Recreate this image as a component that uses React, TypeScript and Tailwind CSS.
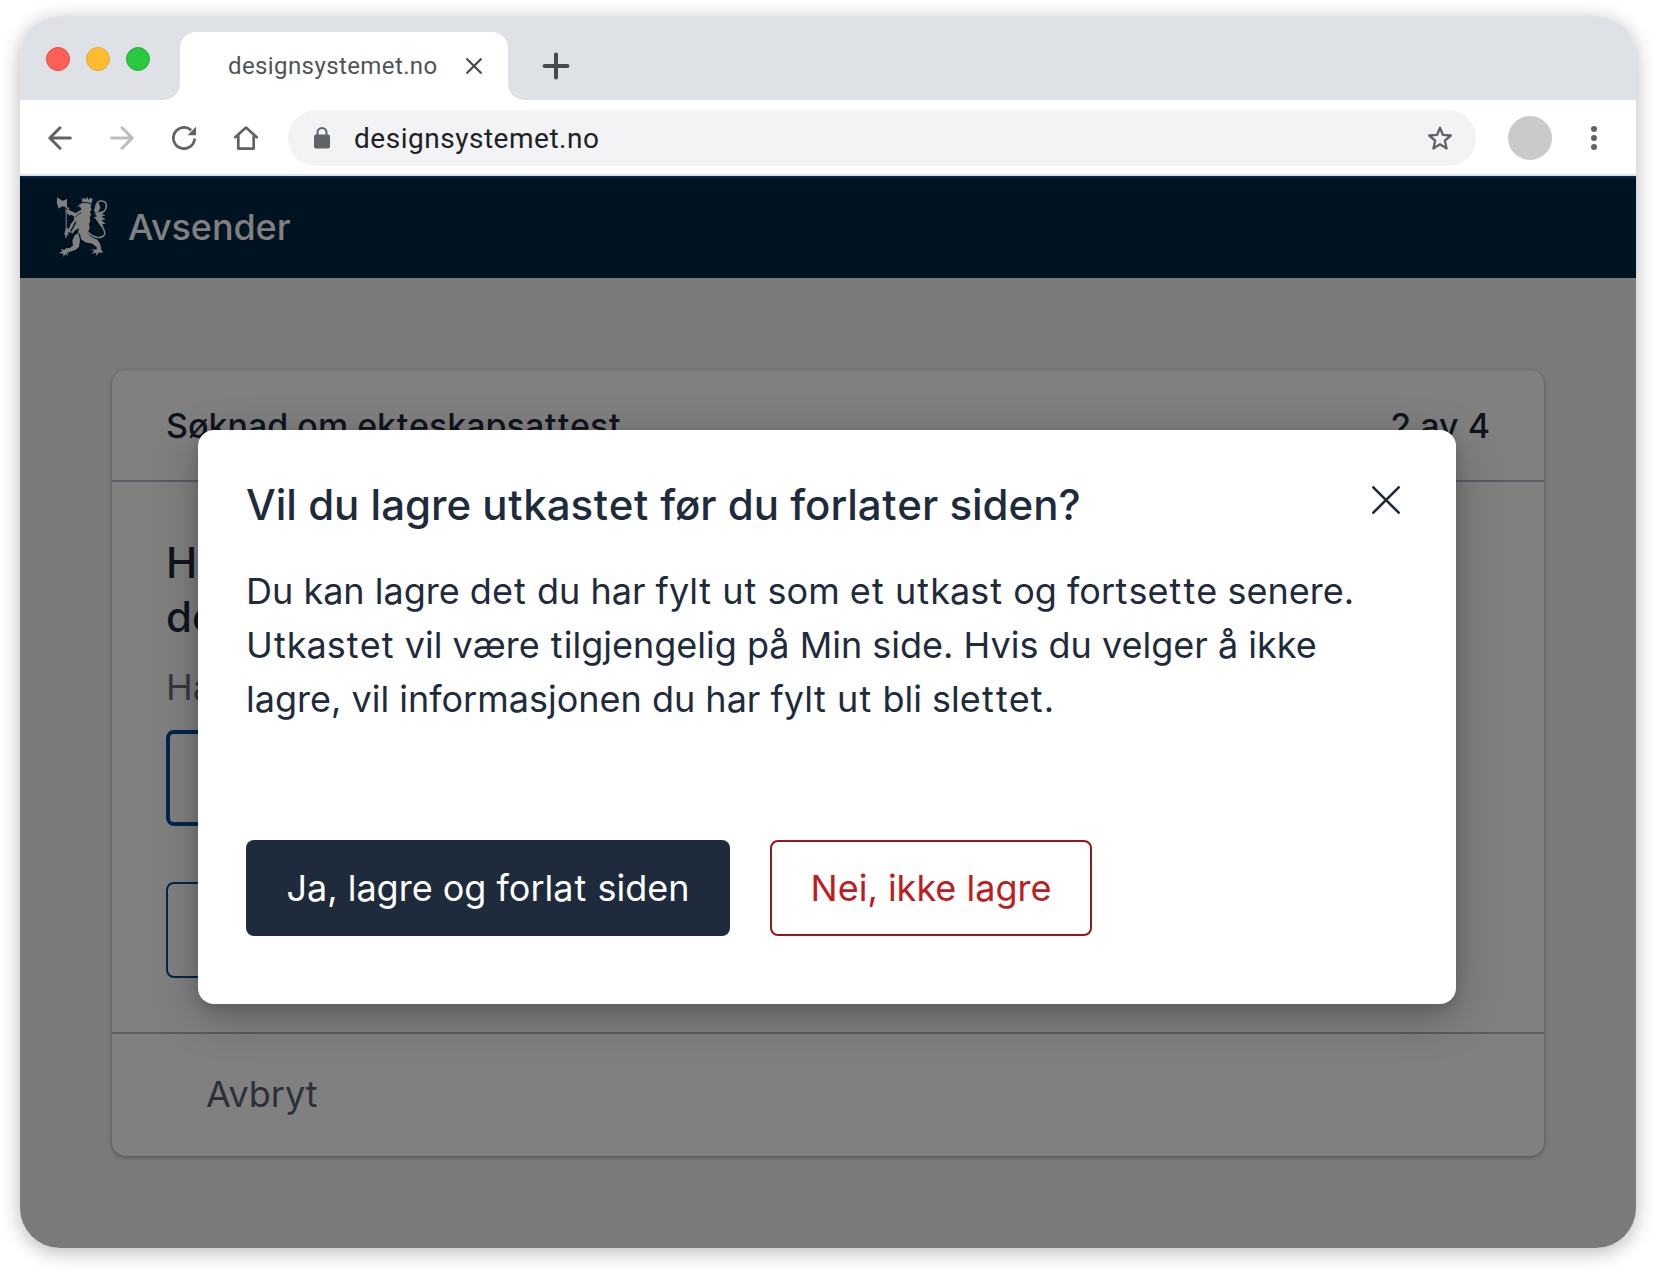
import React from "react";

function Lion({ className }: { className: string }) {
  return (
    <svg viewBox="0 0 240 240" className={className} fill="#808080" stroke="#808080" strokeLinejoin="round" strokeLinecap="round">
      {/* axe */}
      <path stroke="none" d="M51 37 L58 41 L67 47 L75 45 L81 42 L81 69 L74 65 L68 64 L61 67 L56 71 Q48 54 51 37Z" />
      <path fill="none" strokeWidth="3" d="M78.500 44 V158" />
      {/* crown */}
      <path stroke="none" d="M124 37 L129 44 L132 37 L137 44 L141 35 L146 44 L151 38 L158 42 L155 54 L127 50Z" />
      {/* head, mane and torso */}
      <path stroke="none" d="M108 55 L114 59 L122 58 L126 53 L154 56 L152 68 L155 72 L150 81 L153 89 L149 97 L151 107 L147 116 L149 128 L146 137 L142 146 L120 148 L114 142 L117 129 L104 137 L98 146 L93 141 L100 130 L109 112 L101 106 L103 93 L110 82 L124 74 L122 67 L110 64 L120 62Z" />
      <path fill="none" stroke="#001321" strokeWidth="2" d="M106 97 Q112 86 124 83" />
      {/* fore legs */}
      <path stroke="none" d="M81 65 L88 70 L87 75 L99 80 L111 87 L106 96 L93 89 L85 94 L88 87 L77 87 L83 83 L74 77 L83 76Z" />
      <path stroke="none" d="M106 108 L97 127 L91 136 L94 144 L84 141 L86 152 L79 147 L78 159 L73 146 L76 134 L81 127 L86 133 L92 118 L101 106Z" />
      {/* hind legs */}
      <path stroke="none" d="M115 143 L120 164 L117 186 L106 195 L88 201 L81 204 L84 213 L76 207 L71 216 L69 206 L57 203 L67 199 L62 191 L73 195 L78 190 L89 189 L99 182 L97 168 L103 152Z" />
      <path stroke="none" d="M120 145 L143 144 L153 155 L172 164 L181 178 L184 196 L190 202 L181 204 L178 202 L169 213 L169 203 L154 206 L163 199 L153 193 L170 194 L170 186 L157 176 L136 172 L123 162Z" />
      {/* tail */}
      <path fill="none" strokeWidth="4.500" d="M146 143 C158 157 183 163 193 150 C199 138 187 127 179 115 C171 101 176 92 187 83 C203 71 203 51 187 48 C174 46 167 54 168 70" />
      <path stroke="none" d="M166 62 L176 53 L181 68 L176 79 L168 87 L162 76Z" />
      <path stroke="none" d="M175 82 L192 77 L184 87 L197 91 L184 95 L197 103 L184 106 L197 116 L186 117 L192 125 L178 118 L169 104 L162 97 L172 94 L164 88Z" />
    </svg>
  );
}

/* Regular-weight copy whose "t" is set with a little extra room on each side. */
function Copy({ children }: { children: string }) {
  return (
    <>
      {children.split(/(t)/).map((part, i) =>
        part === "t" ? <span key={i} className="mx-[1.1px]">t</span> : part
      )}
    </>
  );
}

/* Same as Copy, for medium-weight headings. */
function Heading({ children }: { children: string }) {
  return (
    <>
      {children.split(/(t)/).map((part, i) =>
        part === "t" ? <span key={i} className="mx-[0.65px]">t</span> : part
      )}
    </>
  );
}

export default function App() {
  return (
    <div className="h-[1272px] w-[1656px] overflow-hidden bg-white px-5 pt-4 font-['Inter',sans-serif]">
      <div className="flex h-[1232px] w-[1616px] flex-col overflow-hidden rounded-[40px] bg-white shadow-[0_4px_20px_rgba(0,0,0,0.28)]">
        {/* tab strip */}
        <div className="flex h-[84px] shrink-0 bg-[#dee1e6] pl-[26px]">
          <div className="flex gap-4 pt-[31px]">
            <span className="h-6 w-6 rounded-full border border-[#e24b41] bg-[#ff5f57]" />
            <span className="h-6 w-6 rounded-full border border-[#e1a73e] bg-[#febc2e]" />
            <span className="h-6 w-6 rounded-full border border-[#2dac2f] bg-[#28c840]" />
          </div>
          <svg className="ml-[14px] mt-[68px] h-4 w-4 text-white" viewBox="0 0 16 16" fill="currentColor"><path d="M16 0v16H0C10 15 16 8 16 0Z" /></svg>
          <div className="mt-4 flex h-[68px] w-[328px] items-center rounded-t-2xl bg-white pl-12 pr-[26px]">
            <span className="flex-1 whitespace-nowrap font-['Roboto',sans-serif] text-[24px] tracking-[0.4px] text-[#505358]">designsystemet.no</span>
            <svg className="h-4 w-4" viewBox="0 0 16 16" stroke="#45484c" strokeWidth="2.2" strokeLinecap="round"><path d="M1.2 1.2l13.6 13.6M14.8 1.2L1.2 14.8" /></svg>
          </div>
          <svg className="mt-[68px] h-4 w-4 text-white" viewBox="0 0 16 16" fill="currentColor"><path d="M0 0v16h16C6 15 0 8 0 0Z" /></svg>
          <svg className="ml-[18px] mt-9 h-7 w-7" viewBox="0 0 28 28" stroke="#45484c" strokeWidth="4" strokeLinecap="round"><path d="M14 2.6v22.8M2.6 14h22.8" /></svg>
        </div>

        {/* toolbar */}
        <div className="flex h-[76px] shrink-0 items-center border-b-2 border-[#dee1e6] pl-7 pr-[37px] pt-0.5">
          <svg className="h-6 w-6" viewBox="0 0 24 24" fill="none" stroke="#5f6368" strokeWidth="3" strokeLinecap="round" strokeLinejoin="round"><path d="M22.3 12H2M12 1.8L1.8 12 12 22.2" /></svg>
          <svg className="ml-[38px] h-6 w-6" viewBox="0 0 24 24" fill="none" stroke="#babcbe" strokeWidth="3" strokeLinecap="round" strokeLinejoin="round"><path d="M1.7 12H22M12 1.8L22.2 12 12 22.2" /></svg>
          <svg className="ml-[38px] h-6 w-6" viewBox="0 0 24 24" fill="none"><path d="M22.6 12.5A10.6 10.6 0 1 1 19.2 4.2" stroke="#5f6368" strokeWidth="2.8" /><path d="M24 .8V9.300H15.500Z" fill="#5f6368" /></svg>
          <svg className="ml-[38px] h-6 w-6" viewBox="0 0 24 24" fill="none" stroke="#5f6368" strokeWidth="2.7" strokeLinejoin="round"><path d="M1.200 11.200L12 1.600 22.800 11.200M4.300 9v13.600h15.400V9" strokeLinecap="round" /></svg>
          <div className="ml-[30px] flex h-14 w-[1188px] items-center rounded-full bg-[#f1f3f4] pl-[26px] pr-6">
            <svg className="h-[22px] w-4" viewBox="0 0 16 22"><path d="M3.500 9V5.500a4.500 4.500 0 0 1 9 0V9" fill="none" stroke="#5f6368" strokeWidth="2" /><rect y="7.500" width="16" height="14" rx="2" fill="#5f6368" /></svg>
            <span className="ml-6 flex-1 pt-0.5 font-['Roboto',sans-serif] text-[28px] tracking-[0.52px] text-[#202124]">designsystemet.no</span>
            <svg className="h-6 w-6" viewBox="0 0 24 24" fill="none" stroke="#5f6368" strokeWidth="2.300" strokeLinejoin="round"><path d="M12 1.800l2.900 7 7.900.700-6 5.100 1.800 7.800-6.600-4.100-6.600 4.100 1.800-7.800-6-5.100L9.100 8.800Z" /></svg>
          </div>
          <span className="ml-8 h-11 w-11 rounded-full bg-[#cacaca]" />
          <span className="ml-auto flex w-[11px] flex-col items-center gap-[3px]">
            <i className="h-1.5 w-1.5 rounded-full bg-[#5f6368]" />
            <i className="h-1.5 w-1.5 rounded-full bg-[#5f6368]" />
            <i className="h-1.5 w-1.5 rounded-full bg-[#5f6368]" />
          </span>
        </div>

        {/* page */}
        <div className="relative flex-1 bg-[#7a7a7a]">
          <header className="flex h-[102px] items-start border-t-2 border-[#00244a] bg-[#001321] pl-5 pt-[7px] text-[#808080]">
            <Lion className="h-20 w-20 shrink-0" />
            <span className="ml-2 mt-[15px] text-[36px] font-medium leading-[54px] tracking-[-0.1px]">Avsender</span>
          </header>
          <main className="mx-[92px] mt-[92px] flex h-[786px] flex-col rounded-[14px] bg-[#808080] shadow-[0_2px_4px_rgba(0,0,0,0.25),0_0_2px_rgba(0,0,0,0.2)]">
            <div className="flex h-28 items-center justify-between border-b-2 border-[#5b5c60] px-[54px] text-[34px] font-medium text-[#0f151e]">
              <span><Heading>Søknad om ekteskapsattest</Heading></span>
              <span>2 av 4</span>
            </div>
            <div className="flex-1 px-[54px] pt-[54px]">
              <h2 className="text-[42px] font-medium leading-[54px] text-[#0f151e]">Har<br />de</h2>
              <p className="mt-4 text-[36px] leading-[54px] text-[#35383f]">Ha</p>
              <div className="mt-4 h-24 w-[480px] rounded-lg border-4 border-[#00264c]" />
              <div className="mt-14 h-24 w-80 rounded-lg border-2 border-[#00264c]" />
            </div>
            <div className="flex h-[124px] items-center border-t-2 border-[#5b5c60] pb-0.5 pl-[94px] text-[36px] text-[#2b313a]">Avbryt</div>
          </main>

          {/* dialog */}
          <section role="dialog" className="absolute left-[178px] top-[254px] flex h-[574px] w-[1258px] flex-col rounded-2xl bg-white px-12 pt-12 text-[#1e2b3c] shadow-[0_12px_44px_rgba(0,0,0,0.28),0_4px_12px_rgba(0,0,0,0.12)]">
            <div className="flex justify-between">
              <h1 className="text-[42px] font-medium leading-[54px]"><Heading>Vil du lagre utkastet før du forlater siden?</Heading></h1>
              <svg className="mr-2 mt-2 h-7 w-7" viewBox="0 0 28 28" stroke="currentColor" strokeWidth="2.600" strokeLinecap="round"><path d="M1.300 1.300l25.400 25.400M26.700 1.300L1.300 26.700" /></svg>
            </div>
            <p className="mt-8 whitespace-nowrap text-[36px] leading-[54px]">
              <Copy>Du kan lagre det du har fylt ut som et utkast og fortsette senere.</Copy><br />
              <Copy>Utkastet vil være tilgjengelig på Min side. Hvis du velger å ikke</Copy><br />
              <Copy>lagre, vil informasjonen du har fylt ut bli slettet.</Copy>
            </p>
            <div className="mt-[114px] flex gap-10 text-[36px]">
              <button className="h-24 w-[484px] rounded-lg bg-[#1e2b3c] text-white"><Copy>Ja, lagre og forlat siden</Copy></button>
              <button className="h-24 w-[322px] rounded-lg border-2 border-[#9b1419] text-[#c01b20]">Nei, ikke lagre</button>
            </div>
          </section>
        </div>
      </div>
    </div>
  );
}
